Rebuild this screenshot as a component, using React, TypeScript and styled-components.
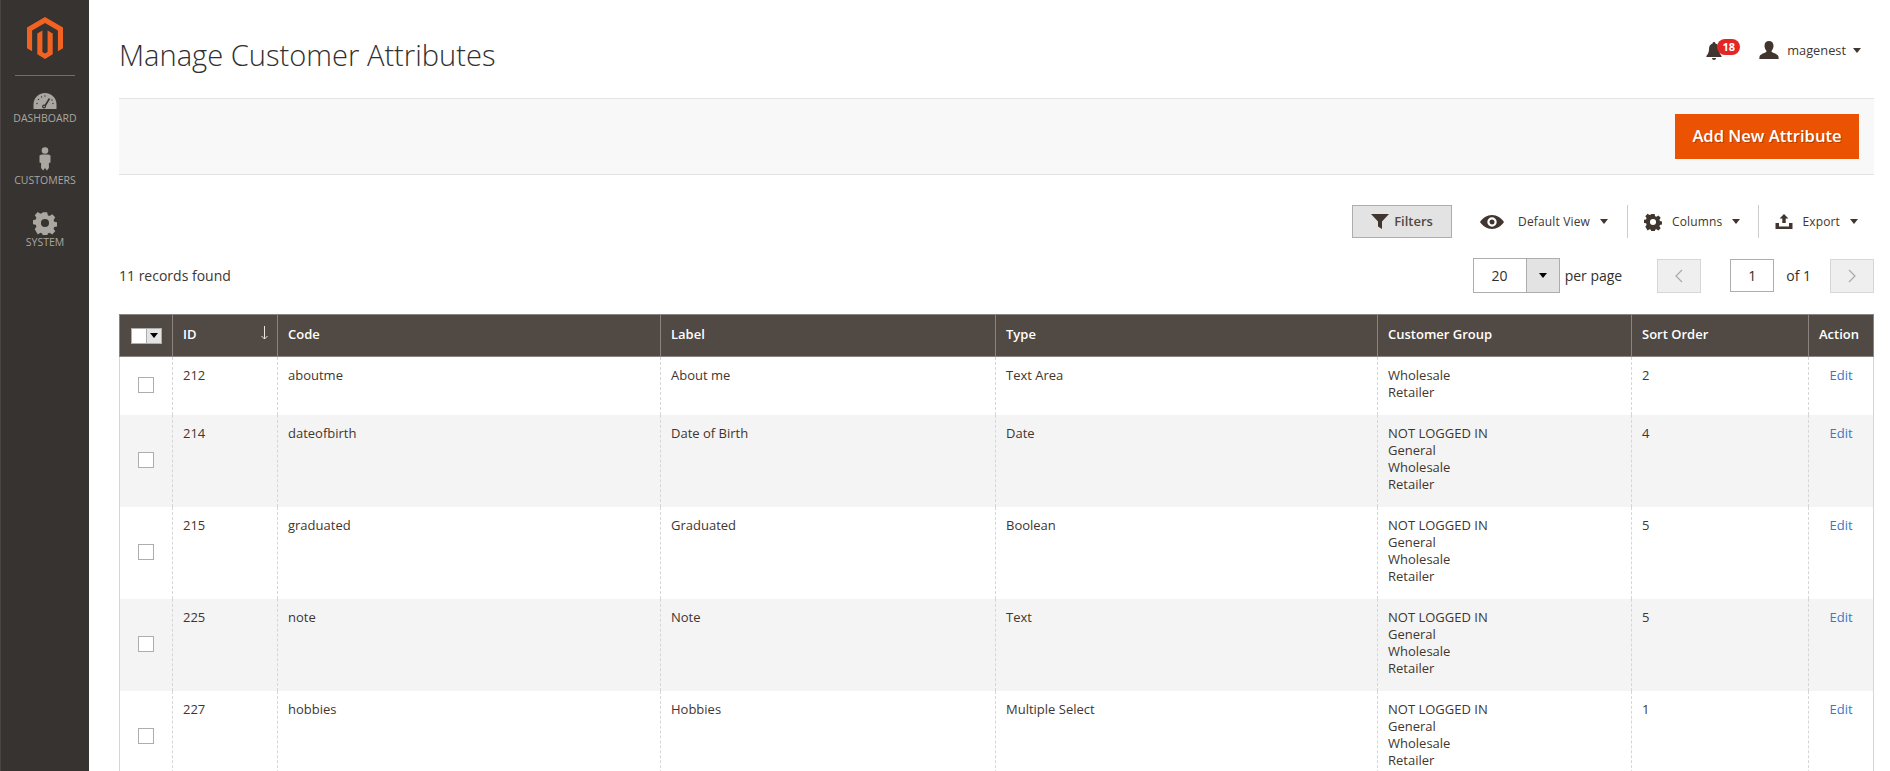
import React from "react";
import styled, { createGlobalStyle } from "styled-components";

const Global = createGlobalStyle`
  html, body { margin: 0; padding: 0; background: #fff; height: 771px; overflow: hidden; }
  body { font-family: "Open Sans", "Liberation Sans", sans-serif; color: #303030; font-size: 13px; }
  #root { height: 771px; overflow: hidden; }
  * { box-sizing: border-box; }
`;

const Page = styled.div`
  display: flex;
  height: 771px;
  overflow: hidden;
`;

const Sidebar = styled.nav`
  flex: 0 0 89px;
  width: 89px;
  background: #373330;
  border-left: 1px solid #4a4542;
  display: flex;
  flex-direction: column;
  align-items: center;
  padding-top: 17px;
`;

const LogoWrap = styled.div`
  width: 60px;
  height: 59px;
  display: flex;
  justify-content: center;
  border-bottom: 1px solid #736e6b;
  margin-bottom: 11px;
`;

const NavItem = styled.a`
  display: flex;
  flex-direction: column;
  align-items: center;
  height: 62px;
  color: #aaa6a0;
  font-size: 10.5px;
  line-height: 14px;
  text-transform: uppercase;
`;

const NavIcon = styled.div`
  height: 24px;
  display: flex;
  align-items: flex-end;
  justify-content: center;
`;

const Main = styled.main`
  flex: 1;
  min-width: 0;
  padding: 0 16px 0 30px;
`;

const Header = styled.header`
  height: 98px;
  display: flex;
  justify-content: space-between;
  align-items: flex-start;
`;

const Title = styled.h1`
  margin: 37px 0 0;
  font-size: 29.1px;
  line-height: 36px;
  font-weight: 300;
  color: #303030;
`;

const HeaderActions = styled.div`
  display: flex;
  align-items: center;
  margin-top: 40px;
  padding-right: 13px;
`;

const Bell = styled.div`
  position: relative;
  width: 16px;
  height: 18px;
  margin-right: 37px;
  margin-top: 2px;
`;

const Badge = styled.span`
  position: absolute;
  left: 11px;
  top: -3px;
  width: 23px;
  height: 16px;
  border-radius: 8px;
  background: #e22626;
  color: #fff;
  font-size: 11px;
  line-height: 16px;
  font-weight: 700;
  text-align: center;
`;

const UserName = styled.span`
  margin-left: 8px;
  font-size: 12.8px;
  color: #41362f;
`;

const Caret = styled.span<{ $gap?: number }>`
  display: inline-block;
  width: 0;
  height: 0;
  margin-left: ${(p) => p.$gap ?? 10}px;
  border-left: 4.5px solid transparent;
  border-right: 4.5px solid transparent;
  border-top: 5px solid #41362f;
`;

const ActionBar = styled.div`
  height: 77px;
  background: #f8f8f8;
  border-top: 1px solid #e3e3e3;
  border-bottom: 1px solid #e3e3e3;
  display: flex;
  justify-content: flex-end;
  align-items: center;
  padding: 0 15px;
`;

const PrimaryButton = styled.button`
  width: 184px;
  height: 45px;
  border: 0;
  padding: 0 0 2px;
  background: #eb5202;
  color: #fff;
  font-family: inherit;
  font-size: 16.6px;
  font-weight: 600;
  text-shadow: 1px 1px 0 rgba(0, 0, 0, 0.25);
`;

const ToolRow = styled.div`
  display: flex;
  justify-content: flex-end;
  align-items: center;
  height: 33px;
  margin-top: 30px;
  padding-right: 16px;
`;

const FilterButton = styled.button`
  width: 100px;
  height: 33px;
  display: flex;
  align-items: center;
  justify-content: center;
  gap: 5px;
  background: #e3e3e3;
  border: 1px solid #adadad;
  font-family: inherit;
  font-size: 13px;
  font-weight: 600;
  color: #514943;
  padding: 0 0 1px;
  margin-right: 28px;
`;

const ToolItem = styled.div<{ $sep?: number }>`
  display: flex;
  align-items: center;
  height: 33px;
  font-size: 12px;
  letter-spacing: 0.15px;
  color: #41362f;
  ${(p) => (p.$sep ? `border-left: 1px solid #ccc; padding-left: 16px; margin-left: ${p.$sep}px;` : "")}
`;

const ToolLabel = styled.span<{ $gap: number }>`
  margin-left: ${(p) => p.$gap}px;
`;

const PagerRow = styled.div`
  display: flex;
  align-items: center;
  justify-content: space-between;
  height: 35px;
  margin-top: 20px;
  margin-bottom: 21px;
`;

const Records = styled.div`
  font-size: 14px;
  color: #41362f;
`;

const Pager = styled.div`
  display: flex;
  align-items: center;
  font-size: 14px;
  color: #303030;
`;

const PerPage = styled.div`
  display: flex;
  width: 87px;
  height: 35px;
  border: 1px solid #adadad;
`;

const PerValue = styled.div`
  width: 52px;
  text-align: center;
  line-height: 33px;
`;

const PerToggle = styled.div`
  flex: 1;
  background: #e3e3e3;
  border-left: 1px solid #adadad;
  display: flex;
  align-items: center;
  justify-content: center;
`;

const PerLabel = styled.span`
  margin: 0 35px 0 5px;
`;

const PageButton = styled.div`
  width: 44px;
  height: 34px;
  background: #efefef;
  border: 1px solid #d6d6d6;
  display: flex;
  align-items: center;
  justify-content: center;
`;

const PageInput = styled.div`
  width: 44px;
  height: 33px;
  border: 1px solid #adadad;
  text-align: center;
  line-height: 31px;
  margin: 0 12px 0 29px;
`;

const OfLabel = styled.span`
  margin-right: 19px;
`;

const Table = styled.table`
  width: 100%;
  table-layout: fixed;
  border-collapse: separate;
  border-spacing: 0;
`;

const Th = styled.th`
  position: relative;
  height: 43px;
  padding: 0 10px 3px;
  background: #514943;
  border: 1px solid #8a837f;
  border-left-width: 0;
  color: #fff;
  font-size: 13px;
  font-weight: 600;
  text-align: left;
  &:first-child { border-left-width: 1px; }
`;

const SortArrow = styled.svg`
  position: absolute;
  right: 9px;
  top: 11px;
`;

const HeadCheck = styled.div`
  display: flex;
  width: 31px;
  height: 16px;
  margin-left: 1px;
  margin-top: 3px;
  border: 1px solid #adadad;
  background: #fff;
`;

const HeadBox = styled.div`
  width: 14px;
  background: #fff;
`;

const HeadToggle = styled.div`
  flex: 1;
  border-left: 1px solid #adadad;
  background: #e3e3e3;
  display: flex;
  align-items: center;
  justify-content: center;
`;

const Row = styled.tr<{ $odd: boolean }>`
  background: ${(p) => (p.$odd ? "#f4f4f4" : "#fff")};
`;

const Td = styled.td`
  padding: 10px 10px 14px;
  vertical-align: top;
  font-size: 13px;
  line-height: 17px;
  color: #41362f;
  border-right: 1px dashed #d6d6d6;
  &:first-child { border-left: 1px solid #d6d6d6; vertical-align: middle; text-align: center; padding-bottom: 12px; padding-top: 10px; }
  &:last-child { border-right: 1px solid #d6d6d6; }
`;

const Check = styled.div`
  width: 16px;
  height: 16px;
  margin: 0 auto;
  background: #fff;
  border: 1px solid #adadad;
`;

const EditLink = styled.a`
  display: block;
  text-align: center;
  color: #3c78c2;
`;

const Logo = () => (
  <svg width="36" height="42" viewBox="0 0 36 42">
    <path fill="#f26322" d="M18 0 0 10.4v20.8l5.1 3V13.4L18 5.9l12.9 7.5v20.8l5.1-3V10.4z" />
    <path fill="#f26322" d="M20.6 35.1 18 36.6l-2.6-1.5V13.4L10.3 16.4v20.8L18 42l7.7-4.8V16.4l-5.1-3z" />
  </svg>
);

const GaugeIcon = () => (
  <svg width="24" height="18" viewBox="0 1 24 18">
    <path fill="#aaa6a0" d="M12 1C5.4 1 .5 6.2.5 12.600V17h23v-4.400C23.500 6.200 18.600 1 12 1z" />
    <path stroke="#373330" strokeWidth="1.6" d="M11.600 14.500 16.500 6.500" />
    <circle cx="11" cy="14.500" r="2" fill="#373330" />
    <circle cx="11" cy="14.500" r=".8" fill="#aaa6a0" />
    <g fill="#373330">
      <circle cx="4" cy="11.500" r=".7" /><circle cx="5.500" cy="7.500" r=".7" /><circle cx="8.500" cy="5" r=".7" />
      <circle cx="12" cy="4" r=".7" /><circle cx="19" cy="8" r=".7" /><circle cx="20" cy="11.500" r=".7" />
    </g>
  </svg>
);

const PersonIcon = () => (
  <svg width="12" height="26" viewBox="0 0 12 26">
    <circle cx="6" cy="3.500" r="3.300" fill="#aaa6a0" />
    <path fill="#aaa6a0" d="M2.500 7.500h7l2 1v7l-1.600.6V21l-2 2.400L6 21l-1.900 2.400-2-2.400v-4.900L.5 15.500v-7z" />
  </svg>
);

const GearIcon = ({ size, color }: { size: number; color: string }) => (
  <svg width={size} height={size} viewBox="0 0 24 24">
    <path
      fill={color}
      fillRule="evenodd"
      d="M9.600 0h4.800l.7 3.400 2 .8 2.900-1.900 3.400 3.400-1.900 2.900.8 2 3.400.7v4.400l-3.400.7-.8 2 1.900 2.900-3.400 3.400-2.900-1.900-2 .8-.7 3.400H9.600l-.7-3.400-2-.8-2.900 1.900L.6 18.900l1.900-2.900-.8-2-3.400-.7V8.900l3.400-.7.8-2L.6 3.300 4 -.1l2.900 1.900 2-.8zM12 7.500a4.500 4.500 0 1 0 0 9 4.500 4.500 0 0 0 0-9z"
      transform="translate(1.200 1.200) scale(.9)"
    />
  </svg>
);

const BellIcon = () => (
  <svg width="16" height="18" viewBox="0 0 16 18">
    <path fill="#41362f" d="M8 0a1.400 1.400 0 0 0-1.400 1.500C4.200 2.200 3 4.300 3 7c0 3.500-1 5-2.600 7v1h15.200v-1C14 12 13 10.500 13 7c0-2.700-1.200-4.800-3.600-5.500A1.400 1.400 0 0 0 8 0z" />
    <path fill="#41362f" d="M6 16h4a2 2 0 0 1-4 0z" />
  </svg>
);

const UserIcon = () => (
  <svg width="20" height="18" viewBox="0 0 20 18">
    <path fill="#41362f" d="M10 0c2.800 0 4.500 2 4.500 4.800 0 1.800-.6 3.500-1.700 4.700-.5.600-.3 1.400.4 1.800 2.700 1.200 6 2.300 6.300 4.500l.2 2.200H.3l.2-2.200c.3-2.200 3.600-3.300 6.300-4.500.7-.4.9-1.200.4-1.800C6.100 8.300 5.500 6.600 5.500 4.800 5.500 2 7.200 0 10 0z" />
  </svg>
);

const FunnelIcon = () => (
  <svg width="18" height="15" viewBox="0 0 18 15">
    <path fill="#41362f" d="M0 0h18l-7 7.500V15l-4-2.500V7.500z" />
  </svg>
);

const EyeIcon = () => (
  <svg width="24" height="14" viewBox="0 0 24 14">
    <path fill="#41362f" fillRule="evenodd" d="M12 0c5 0 9.300 2.900 12 7-2.700 4.100-7 7-12 7S2.700 11.100 0 7c2.700-4.100 7-7 12-7zm0 2.300a4.700 4.700 0 1 0 0 9.400 4.700 4.700 0 0 0 0-9.400zM12 4.500a2.500 2.500 0 1 1 0 5 2.500 2.500 0 0 1 0-5z" />
  </svg>
);

const ExportIcon = () => (
  <svg width="18" height="15" viewBox="0 0 17 15">
    <path fill="#41362f" d="M8.500 0 13 4.500h-2.800V9H6.800V4.500H4z" />
    <path fill="#41362f" d="M0 9h3.500v3.500h10V9H17v6H0z" />
  </svg>
);

const Chevron = ({ left }: { left?: boolean }) => (
  <svg width="8" height="14" viewBox="0 0 8 14">
    <path fill="none" stroke="#a9a9a9" strokeWidth="1.200" d={left ? "M7 1 1 7l6 6" : "M1 1l6 6-6 6"} />
  </svg>
);

const SmallCaret = styled.span`
  display: block;
  width: 0;
  height: 0;
  border-left: 4px solid transparent;
  border-right: 4px solid transparent;
  border-top: 5px solid #000;
`;

const ALL = ["NOT LOGGED IN", "General", "Wholesale", "Retailer"];
const rows = [
  { id: 212, code: "aboutme", label: "About me", type: "Text Area", groups: ["Wholesale", "Retailer"], sort: 2 },
  { id: 214, code: "dateofbirth", label: "Date of Birth", type: "Date", groups: ALL, sort: 4 },
  { id: 215, code: "graduated", label: "Graduated", type: "Boolean", groups: ALL, sort: 5 },
  { id: 225, code: "note", label: "Note", type: "Text", groups: ALL, sort: 5 },
  { id: 227, code: "hobbies", label: "Hobbies", type: "Multiple Select", groups: ALL, sort: 1 },
];

export default function App() {
  return (
    <Page>
      <Global />
      <Sidebar>
        <LogoWrap><Logo /></LogoWrap>
        <NavItem><NavIcon><GaugeIcon /></NavIcon>Dashboard</NavItem>
        <NavItem><NavIcon><PersonIcon /></NavIcon>Customers</NavItem>
        <NavItem><NavIcon><GearIcon size={24} color="#aaa6a0" /></NavIcon>System</NavItem>
      </Sidebar>
      <Main>
        <Header>
          <Title>Manage Customer Attributes</Title>
          <HeaderActions>
            <Bell><BellIcon /><Badge>18</Badge></Bell>
            <UserIcon />
            <UserName>magenest</UserName>
            <Caret $gap={7} />
          </HeaderActions>
        </Header>
        <ActionBar><PrimaryButton>Add New Attribute</PrimaryButton></ActionBar>
        <ToolRow>
          <FilterButton><FunnelIcon />Filters</FilterButton>
          <ToolItem><EyeIcon /><ToolLabel $gap={14}>Default View</ToolLabel><Caret /></ToolItem>
          <ToolItem $sep={19}><GearIcon size={18} color="#41362f" /><ToolLabel $gap={10}>Columns</ToolLabel><Caret /></ToolItem>
          <ToolItem $sep={18}><ExportIcon /><ToolLabel $gap={9}>Export</ToolLabel><Caret /></ToolItem>
        </ToolRow>
        <PagerRow>
          <Records>11 records found</Records>
          <Pager>
            <PerPage><PerValue>20</PerValue><PerToggle><SmallCaret /></PerToggle></PerPage>
            <PerLabel>per page</PerLabel>
            <PageButton><Chevron left /></PageButton>
            <PageInput>1</PageInput>
            <OfLabel>of 1</OfLabel>
            <PageButton><Chevron /></PageButton>
          </Pager>
        </PagerRow>
        <Table>
          <colgroup>
            <col style={{ width: 54 }} /><col style={{ width: 105 }} /><col style={{ width: 383 }} /><col style={{ width: 335 }} />
            <col style={{ width: 382 }} /><col style={{ width: 254 }} /><col style={{ width: 177 }} /><col />
          </colgroup>
          <thead>
            <tr>
              <Th><HeadCheck><HeadBox /><HeadToggle><SmallCaret /></HeadToggle></HeadCheck></Th>
              <Th>ID<SortArrow width="7" height="14" viewBox="0 0 7 14"><path fill="none" stroke="#e6e6e6" d="M3.500 0v13M.5 10l3 3 3-3" /></SortArrow></Th>
              <Th>Code</Th><Th>Label</Th><Th>Type</Th><Th>Customer Group</Th><Th>Sort Order</Th><Th>Action</Th>
            </tr>
          </thead>
          <tbody>
            {rows.map((r, i) => (
              <Row key={r.id} $odd={i % 2 === 1}>
                <Td><Check /></Td>
                <Td>{r.id}</Td>
                <Td>{r.code}</Td>
                <Td>{r.label}</Td>
                <Td>{r.type}</Td>
                <Td>{r.groups.map((g) => <div key={g}>{g}</div>)}</Td>
                <Td>{r.sort}</Td>
                <Td><EditLink>Edit</EditLink></Td>
              </Row>
            ))}
          </tbody>
        </Table>
      </Main>
    </Page>
  );
}
